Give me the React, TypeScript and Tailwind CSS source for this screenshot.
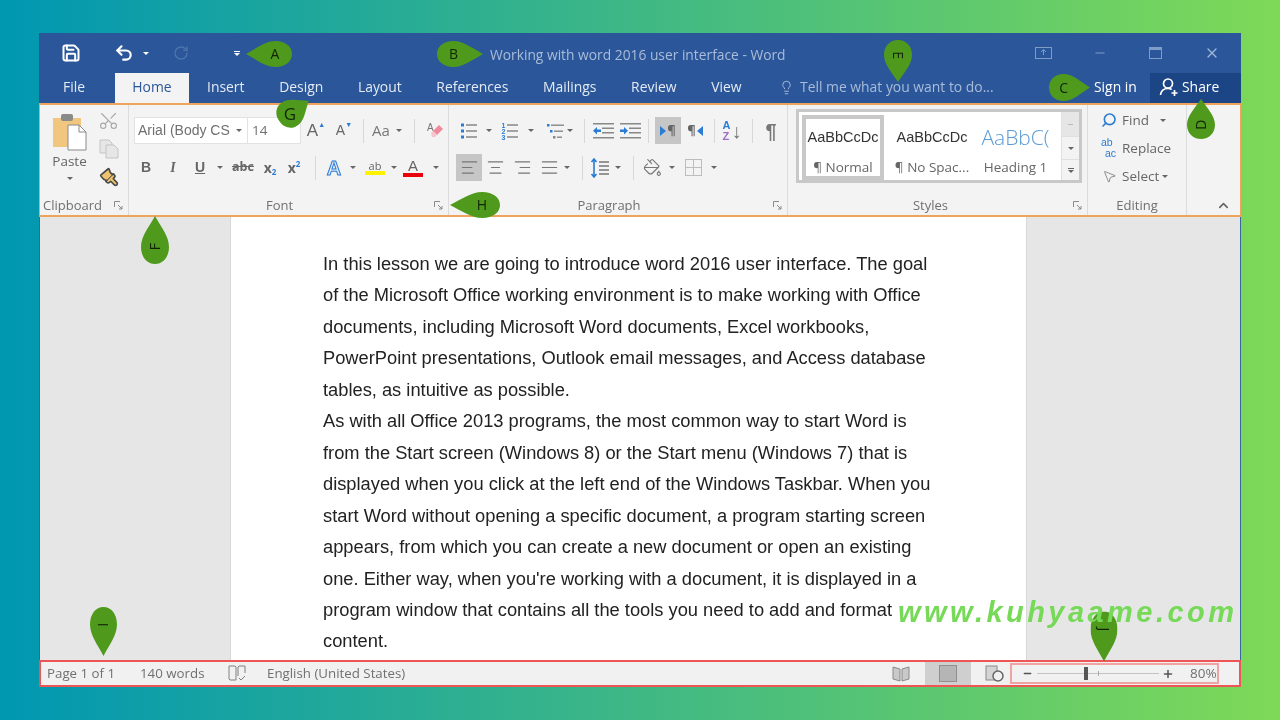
import type { ReactNode } from 'react';
import {
  AlignCenter,
  AlignJustify,
  AlignLeft,
  AlignRight,
  ChevronUp,
  Lightbulb,
  Minus,
  MousePointer2,
  Paintbrush,
  PaintBucket,
  Plus,
  Save,
  Scissors,
  Search,
  Undo2,
  RotateCw,
  X,
} from 'lucide-react';

const docLines = [
  'In this lesson we are going to introduce word 2016 user interface. The goal',
  'of the Microsoft Office working environment is to make working with Office',
  'documents, including Microsoft Word documents, Excel workbooks,',
  'PowerPoint presentations, Outlook email messages, and Access database',
  'tables, as intuitive as possible.',
  'As with all Office 2013 programs, the most common way to start Word is',
  'from the Start screen (Windows 8) or the Start menu (Windows 7) that is',
  'displayed when you click at the left end of the Windows Taskbar. When you',
  'start Word without opening a specific document, a program starting screen',
  'appears, from which you can create a new document or open an existing',
  "one. Either way, when you're working with a document, it is displayed in a",
  'program window that contains all the tools you need to add and format',
  'content.',
];

function Caret({ className = '' }: { className?: string }) {
  return <span className={`block w-0 h-0 border-x-[3px] border-x-transparent border-t-[3px] border-t-[#666] ${className}`} />;
}

function Cell({ w, children, className = '' }: { w: string; children?: ReactNode; className?: string }) {
  return <div className={`flex items-center justify-center shrink-0 ${w} ${className}`}>{children}</div>;
}

function Sep({ className = 'h-[24px]' }: { className?: string }) {
  return <div className={`w-px bg-[#d8d8d8] shrink-0 ${className}`} />;
}

function Launcher() {
  return (
    <svg width="9" height="9" viewBox="0 0 9 9" className="text-[#8a8a8a]">
      <path d="M0.5 6V0.5H6" fill="none" stroke="currentColor" />
      <path d="M4 4L8 8M8 5v3H5" fill="none" stroke="currentColor" />
    </svg>
  );
}

function Lines({ dots, numbers }: { dots?: boolean; numbers?: boolean }) {
  return (
    <svg width="18" height="18" viewBox="0 0 18 18">
      {[3, 9, 15].map((y, i) => (
        <g key={y}>
          {dots && <rect x="1" y={y - 1.5} width="3" height="3" fill="#2b7cd3" />}
          {numbers && (
            <text x="0.5" y={y + 2.5} fontSize="7" fontWeight="bold" fill="#2b7cd3" fontFamily="Liberation Sans">
              {i + 1}
            </text>
          )}
          <rect x="6" y={y - 0.75} width="11" height="1.5" fill="#888" />
        </g>
      ))}
    </svg>
  );
}

function Multilevel() {
  return (
    <svg width="18" height="18" viewBox="0 0 18 18">
      <rect x="0" y="2" width="2.5" height="2.5" fill="#2b7cd3" />
      <rect x="4" y="2.5" width="13" height="1.4" fill="#888" />
      <rect x="3" y="8" width="2.5" height="2.5" fill="#2b7cd3" />
      <rect x="7" y="8.5" width="9" height="1.4" fill="#888" />
      <rect x="6" y="14" width="2.5" height="2.5" fill="#888" />
      <rect x="10" y="14.5" width="5" height="1.4" fill="#888" />
    </svg>
  );
}

function Indent({ flip }: { flip?: boolean }) {
  return (
    <svg width="21" height="18" viewBox="0 0 21 18">
      <rect x="0" y="1" width="21" height="1.5" fill="#888" />
      <rect x="9" y="5.5" width="12" height="1.5" fill="#888" />
      <rect x="9" y="10" width="12" height="1.5" fill="#888" />
      <rect x="0" y="15" width="21" height="1.5" fill="#888" />
      <path d={flip ? 'M0 7.5h4V5l4 3.7-4 3.7V10H0z' : 'M8 7.5H4V5L0 8.7l4 3.7V10h4z'} fill="#2b7cd3" />
    </svg>
  );
}

function Direction({ rtl }: { rtl?: boolean }) {
  return (
    <span className="flex items-center text-[13px] font-bold text-[#666]">
      {!rtl && <span className="w-0 h-0 border-y-[5px] border-y-transparent border-l-[6px] border-l-[#2b7cd3] mr-[1px]" />}
      <span>¶</span>
      {rtl && <span className="w-0 h-0 border-y-[5px] border-y-transparent border-r-[6px] border-r-[#2b7cd3] ml-[1px]" />}
    </span>
  );
}

function Pin({ className, letter, letterClassName = '' }: { className: string; letter: string; letterClassName?: string }) {
  return (
    <div className={`absolute ${className}`}>
      <svg viewBox="0 0 48 28" preserveAspectRatio="none" className="w-full h-full block">
        <path d="M0 14C0 6 7 0 17 0C28 0 37 8 48 14C37 20 28 28 17 28C7 28 0 22 0 14Z" fill="#4f9a1c" />
      </svg>
      <span className={`absolute top-1/2 left-[36%] -translate-x-1/2 -translate-y-1/2 text-[14px] leading-none text-[#102406] ${letterClassName}`}>
        {letter}
      </span>
    </div>
  );
}

function StyleItem({ sample, label, className = '' }: { sample: ReactNode; label: string; className?: string }) {
  return (
    <div className={`flex flex-col items-center overflow-hidden shrink-0 ${className}`}>
      <div className="h-[34px] flex items-center whitespace-nowrap">{sample}</div>
      <div className="text-[13.5px] text-[#666] whitespace-nowrap leading-none mt-[6px]">{label}</div>
    </div>
  );
}

function Group({
  w,
  label,
  children,
  launcher = true,
  labelClassName = 'justify-center',
}: {
  w: string;
  label: string;
  children: ReactNode;
  launcher?: boolean;
  labelClassName?: string;
}) {
  return (
    <div className={`relative flex flex-col shrink-0 h-full border-r border-[#dcdcdc] ${w}`}>
      <div className="flex-1 min-h-0">{children}</div>
      <div className={`h-[19px] flex items-center text-[13px] text-[#707070] ${labelClassName}`}>{label}</div>
      {launcher && <div className="absolute right-[5px] bottom-[5px] flex"><Launcher /></div>}
    </div>
  );
}

export default function App() {
  return (
    <div className="w-[1280px] h-[720px] overflow-hidden bg-linear-to-r/srgb from-[#0097b2] to-[#7ed957] font-['Open_Sans',sans-serif]">
      <div className="relative h-full pt-[33px] pl-[39px] blur-[0.6px]">
        <div className="w-[1202px] h-[654px] flex flex-col">
          {/* Title bar */}
          <div className="h-[40px] shrink-0 bg-[#2b579a] flex items-center text-white">
            <Cell w="w-[64px]"><Save size={20} strokeWidth={2.4} /></Cell>
            <Cell w="w-[46px] ml-[-5px]"><Undo2 size={20} strokeWidth={2.6} className="ml-[6px]" /></Cell>
            <Caret className="border-t-white ml-[-1px]" />
            <Cell w="w-[30px] ml-[17px]"><RotateCw size={16} strokeWidth={2} className="text-[#4d74ad]" /></Cell>
            <div className="ml-[38px] flex flex-col items-center gap-[1px]">
              <span className="block w-[6px] h-px bg-white" />
              <Caret className="border-t-white" />
            </div>
            <div className="ml-[250px] mt-[4px] text-[13.8px] text-[#a9bcd9] whitespace-nowrap w-[545px]">
              Working with word 2016 user interface - Word
            </div>
            <svg width="17" height="12" viewBox="0 0 17 12" className="text-[#7f9cc6]">
              <rect x="0.5" y="0.5" width="16" height="11" fill="none" stroke="currentColor" />
              <path d="M8.5 8V3M6 5l2.5-2.5L11 5" fill="none" stroke="currentColor" />
            </svg>
            <Minus size={14} className="text-[#7f9cc6] ml-[41px]" />
            <svg width="13" height="12" viewBox="0 0 13 12" className="text-[#7f9cc6] ml-[42px]">
              <rect x="0.5" y="0.5" width="12" height="11" fill="none" stroke="currentColor" />
              <rect x="0.5" y="0.5" width="12" height="2.5" fill="currentColor" />
            </svg>
            <X size={16} className="text-[#9db3d4] ml-[42px]" />
          </div>

          {/* Tabs */}
          <div className="h-[30px] shrink-0 bg-[#2b579a] flex items-end text-[13.9px] text-[#e3eaf4]">
            <div className="h-full flex items-center ml-[24px] w-[52px] pb-[2px]">File</div>
            <div className="h-full w-[74px] bg-[#f3f3f3] flex items-center justify-center text-[#2b579a] pb-[2px]">Home</div>
            <div className="h-full flex items-center ml-[18px] gap-[34.7px] w-[572px] pb-[2px]">
              <span>Insert</span>
              <span>Design</span>
              <span>Layout</span>
              <span>References</span>
              <span>Mailings</span>
              <span>Review</span>
              <span>View</span>
            </div>
            <div className="h-full flex items-center text-[#a9bcd9] pb-[2px]">
              <Lightbulb size={15} strokeWidth={1.5} className="mr-[6px]" />
              <span className="w-[294px] whitespace-nowrap">Tell me what you want to do...</span>
            </div>
            <div className="h-full flex items-center w-[56px] text-white pb-[2px]">Sign in</div>
            <div className="h-full flex-1 bg-[#1c4585] flex items-center pl-[9px] text-white pb-[2px]">
              <svg width="20" height="20" viewBox="0 0 20 20" className="mr-[3px]" fill="none" stroke="currentColor" strokeWidth="1.7">
                <circle cx="9" cy="6.5" r="4.5" />
                <path d="M1.5 18c.5-4 3-6.5 7.5-6.5 1.500 0 2.7.3 3.7.9M15.5 13v6M12.5 16h6" />
              </svg>
              Share
            </div>
          </div>

          {/* Ribbon */}
          <div className="h-[114px] shrink-0 bg-[#f3f3f3] border-y-2 border-x border-[#f0a35c] flex">
            <Group w="w-[89px]" label="Clipboard" labelClassName="pl-[3px]">
              <div className="flex h-full">
                <div className="w-[59px] flex flex-col items-center pt-[8px]">
                  <svg width="36" height="38" viewBox="0 0 36 38">
                    <rect x="1" y="5" width="28" height="29" fill="#f1c77f" />
                    <rect x="9" y="1" width="12" height="7" rx="2" fill="#8a8a8a" />
                    <path d="M16 12h11l7 7v18H16z" fill="#fff" stroke="#8a8a8a" />
                    <path d="M27 12v7h7" fill="none" stroke="#8a8a8a" />
                  </svg>
                  <span className="text-[13.5px] text-[#666] leading-none mt-[4px]">Paste</span>
                  <Caret className="mt-[8px]" />
                </div>
                <div className="flex flex-col items-center gap-[8px] pt-[5px] ml-[-1px]">
                  <Scissors size={21} strokeWidth={1.3} className="text-[#a8a8a8] -rotate-90" />
                  <svg width="20" height="20" viewBox="0 0 20 20" fill="#e6e6e6" stroke="#c4c4c4">
                    <path d="M1 1h9l3 3v10H1z" />
                    <path d="M7 6h8l4 4v9H7z" />
                  </svg>
                  <Paintbrush size={20} strokeWidth={2} className="text-[#4a4a4a] fill-[#edc36f] rotate-90" />
                </div>
              </div>
            </Group>

            <Group w="w-[320px]" label="Font" labelClassName="justify-center pr-[18px]">
              <div className="flex flex-col pl-[5px] pt-[12px]">
                <div className="flex items-center h-[27px]">
                  <div className="w-[114px] h-full bg-white border border-[#e2e2e2] flex items-center justify-between pl-[3px] pr-[5px] text-[14px] text-[#707070] font-['Liberation_Sans',sans-serif]">
                    <span>Arial (Body CS</span>
                    <Caret />
                  </div>
                  <div className="w-[53px] h-full bg-white border border-l-0 border-[#e2e2e2] flex items-center pl-[4px] text-[13.5px] text-[#707070]">14</div>
                  <Cell w="w-[28px] ml-[1px]" className="text-[#666] text-[17px] font-['Liberation_Sans',sans-serif]">A<span className="text-[7px] text-[#2b7cd3] -mt-[10px]">▲</span></Cell>
                  <Cell w="w-[28px]" className="text-[#666] text-[14px] font-['Liberation_Sans',sans-serif]">A<span className="text-[7px] text-[#2b7cd3] -mt-[10px]">▼</span></Cell>
                  <Sep className="h-[24px] ml-[5px]" />
                  <Cell w="w-[26px] ml-[4px]" className="text-[15px] text-[#777]">Aa</Cell>
                  <Caret className="ml-[2px]" />
                  <Sep className="h-[24px] ml-[12px]" />
                  <Cell w="w-[24px] ml-[7px]">
                    <svg width="18" height="18" viewBox="0 0 18 18">
                      <path d="M8 9l6-6 4 4-6 6z" fill="#ef8a9c" />
                      <path d="M6 11l2-2 4 4-2 2H7z" fill="#f5c4cc" />
                      <text x="2" y="9" fontSize="10" fill="#777" fontFamily="Liberation Sans">A</text>
                    </svg>
                  </Cell>
                </div>
                <div className="flex items-center h-[27px] mt-[10px] text-[#666]">
                  <Cell w="w-[24px]" className="font-bold text-[14px] font-['Liberation_Sans',sans-serif]">B</Cell>
                  <Cell w="w-[30px]" className="italic font-bold text-[14px] font-['Liberation_Serif',serif]">I</Cell>
                  <Cell w="w-[24px]" className="font-bold underline text-[14px] font-['Liberation_Sans',sans-serif]">U</Cell>
                  <Caret className="ml-[5px]" />
                  <Cell w="w-[30px] ml-[5px]" className="text-[12.5px] line-through font-bold">abc</Cell>
                  <Cell w="w-[24px]" className="font-bold text-[14px]">x<span className="text-[8px] text-[#2b7cd3] mt-[8px]">2</span></Cell>
                  <Cell w="w-[24px]" className="font-bold text-[14px]">x<span className="text-[8px] text-[#2b7cd3] -mt-[8px]">2</span></Cell>
                  <Sep className="h-[24px] ml-[9px]" />
                  <Cell w="w-[28px] ml-[4px]">
                    <span className="text-[20px] font-bold text-[#dbe9f7] [-webkit-text-stroke:1px_#2b7cd3] font-['Liberation_Sans',sans-serif] leading-none">A</span>
                  </Cell>
                  <Caret className="ml-[2px]" />
                  <Cell w="w-[26px] ml-[6px]">
                    <div className="flex flex-col items-center leading-none">
                      <span className="text-[11px] text-[#666]">ab</span>
                      <span className="block w-[20px] h-[4px] bg-[#fff200]" />
                    </div>
                  </Cell>
                  <Caret className="ml-[3px]" />
                  <Cell w="w-[22px] ml-[5px]">
                    <div className="flex flex-col items-center leading-none">
                      <span className="text-[15px] text-[#666] font-['Liberation_Sans',sans-serif]">A</span>
                      <span className="block w-[20px] h-[4px] bg-[#e8000d]" />
                    </div>
                  </Cell>
                  <Caret className="ml-[9px]" />
                </div>
              </div>
            </Group>

            <Group w="w-[339px]" label="Paragraph" labelClassName="justify-center pr-[18px]">
              <div className="flex flex-col pl-[6px] pt-[12px]">
                <div className="flex items-center h-[27px]">
                  <Cell w="w-[27px]"><Lines dots /></Cell>
                  <Caret className="ml-[4px]" />
                  <Cell w="w-[24px] ml-[6px]"><Lines numbers /></Cell>
                  <Caret className="ml-[6px]" />
                  <Cell w="w-[24px] ml-[10px]"><Multilevel /></Cell>
                  <Caret className="ml-[-1px]" />
                  <Sep className="h-[24px] ml-[11px]" />
                  <Cell w="w-[26px] ml-[5px]"><Indent /></Cell>
                  <Cell w="w-[26px] ml-[1px]"><Indent flip /></Cell>
                  <Sep className="h-[24px] ml-[5px]" />
                  <Cell w="w-[26px] ml-[6px] h-[27px]" className="bg-[#c6c6c6]"><Direction /></Cell>
                  <Cell w="w-[26px] ml-[1px]"><Direction rtl /></Cell>
                  <Sep className="h-[24px] ml-[6px]" />
                  <Cell w="w-[24px] ml-[5px]">
                    <div className="flex flex-col text-[11px] leading-[11px] font-bold font-['Liberation_Sans',sans-serif] mr-[1px]">
                      <span className="text-[#2b7cd3]">A</span>
                      <span className="text-[#9b6fc4]">Z</span>
                    </div>
                    <span className="text-[#777] text-[20px] leading-none">↓</span>
                  </Cell>
                  <Sep className="h-[24px] ml-[8px]" />
                  <Cell w="w-[24px] ml-[6px]" className="text-[#777] text-[20px] font-bold font-['Liberation_Sans',sans-serif]">¶</Cell>
                </div>
                <div className="flex items-center h-[27px] mt-[10px] ml-[1px]">
                  <Cell w="w-[26px] h-[27px]" className="bg-[#c6c6c6]"><AlignLeft size={19} strokeWidth={1.5} className="text-[#777]" /></Cell>
                  <Cell w="w-[27px]"><AlignCenter size={19} strokeWidth={1.5} className="text-[#777]" /></Cell>
                  <Cell w="w-[27px]"><AlignRight size={19} strokeWidth={1.5} className="text-[#777]" /></Cell>
                  <Cell w="w-[27px]"><AlignJustify size={19} strokeWidth={1.5} className="text-[#777]" /></Cell>
                  <Caret className="ml-[1px]" />
                  <Sep className="h-[24px] ml-[12px]" />
                  <Cell w="w-[24px] ml-[5px]">
                    <svg width="20" height="20" viewBox="0 0 20 20">
                      <path d="M4 1v18M1.5 4L4 1l2.5 3M1.5 16L4 19l2.5-3" fill="none" stroke="#2b7cd3" strokeWidth="1.6" />
                      <path d="M9 4h10M9 8h10M9 12h10M9 16h10" stroke="#777" strokeWidth="1.5" />
                    </svg>
                  </Cell>
                  <Caret className="ml-[3px]" />
                  <Sep className="h-[24px] ml-[12px]" />
                  <Cell w="w-[24px] ml-[6px]"><PaintBucket size={19} strokeWidth={1.4} className="text-[#777]" /></Cell>
                  <Caret className="ml-[5px]" />
                  <Cell w="w-[22px] ml-[7px]">
                    <svg width="17" height="17" viewBox="0 0 17 17" fill="none" stroke="#bdbdbd">
                      <rect x="0.5" y="0.5" width="16" height="16" />
                      <path d="M8.5 0v17M0 8.5h17" />
                    </svg>
                  </Cell>
                  <Caret className="ml-[7px]" />
                </div>
              </div>
            </Group>

            <Group w="w-[300px]" label="Styles" labelClassName="justify-center pr-[14px]">
              <div className="ml-[8px] mt-[4px] w-[286px] h-[74px] border-[3px] border-[#c8c8c8] bg-white flex">
                <div className="flex-1 flex p-[3px] pr-0">
                  <StyleItem
                    className="w-[82px] border-[4px] border-[#c8c8c8] h-[65px] pt-[2px]"
                    sample={<span className="text-[14.5px] text-[#333] font-['Liberation_Sans',sans-serif]">AaBbCcDc</span>}
                    label="¶ Normal"
                  />
                  <StyleItem
                    className="w-[84px] ml-[6px] pt-[6px]"
                    sample={<span className="text-[14.5px] text-[#333] font-['Liberation_Sans',sans-serif]">AaBbCcDc</span>}
                    label="¶ No Spac..."
                  />
                  <StyleItem
                    className="w-[77px] ml-[3px] pt-[6px]"
                    sample={<span className="text-[21px] font-light text-[#5b9bd5]">AaBbC(</span>}
                    label="Heading 1"
                  />
                </div>
                <div className="w-[18px] flex flex-col border-l border-[#e0e0e0] bg-[#f3f3f3]">
                  <div className="h-[24px] flex items-center justify-center bg-[#e6e6e6]"><span className="block w-[5px] h-px bg-[#bbb]" /></div>
                  <div className="h-[24px] flex items-center justify-center border-y border-[#e0e0e0]"><Caret /></div>
                  <div className="flex-1 flex flex-col items-center justify-center gap-[1px]"><span className="block w-[6px] h-px bg-[#666]" /><Caret /></div>
                </div>
              </div>
            </Group>

            <Group w="w-[99px]" label="Editing" launcher={false}>
              <div className="flex flex-col pl-[13px] pt-[1px] text-[13.5px] text-[#666]">
                <div className="flex items-center h-[28px]">
                  <Search size={16} strokeWidth={2.4} className="text-[#2b7cd3] -scale-x-100 mr-[5px]" />
                  <span>Find</span>
                  <Caret className="ml-[11px]" />
                </div>
                <div className="flex items-center h-[28px]">
                  <span className="flex flex-col text-[10.5px] leading-[11px] text-[#2b7cd3] w-[21px] font-['Liberation_Sans',sans-serif]">
                    <span>ab</span>
                    <span className="ml-[4px]">ac</span>
                  </span>
                  <span>Replace</span>
                </div>
                <div className="flex items-center h-[28px]">
                  <MousePointer2 size={15} strokeWidth={1.3} className="text-[#777] ml-[1px] mr-[5px]" />
                  <span>Select</span>
                  <Caret className="ml-[3px]" />
                </div>
              </div>
            </Group>

            <div className="flex-1 flex items-end justify-end pr-[9px] pb-[2px]">
              <ChevronUp size={15} strokeWidth={2.6} className="text-[#666]" />
            </div>
          </div>

          {/* Document */}
          <div className="flex-1 min-h-0 flex bg-[#e6e6e6] border-x border-[#3a65a5]">
            <div className="ml-[190px] w-[797px] bg-white border-x border-[#d8d8d8] pt-[31px] pl-[92px] text-[18.3px] leading-[31.45px] text-[#222] font-['Liberation_Sans',sans-serif] whitespace-nowrap overflow-hidden">
              {docLines.map((line) => (
                <div key={line}>{line}</div>
              ))}
            </div>
          </div>

          {/* Status bar */}
          <div className="h-[27px] shrink-0 bg-[#f1f1f1] border-2 border-[#ee5656] flex items-center text-[13.3px] text-[#707070]">
            <span className="ml-[6px] w-[93px]">Page 1 of 1</span>
            <span className="w-[88px]">140 words</span>
            <svg width="18" height="17" viewBox="0 0 18 17" fill="none" stroke="#808080" className="w-[18px]">
              <path d="M1 1h6l1 1v13H2l-1-1zM10 2l1-1h6v7M10 2v9" />
              <path d="M11 13l2 2 4-4" />
            </svg>
            <span className="ml-[21px] w-[624px] whitespace-nowrap">English (United States)</span>
            <Cell w="w-[20px]">
              <svg width="18" height="16" viewBox="0 0 18 16" fill="#c9c9c9" stroke="#8a8a8a">
                <path d="M1 1l7 2v12l-7-2zM17 1l-7 2v12l7-2z" />
              </svg>
            </Cell>
            <Cell w="w-[46px] ml-[14px] h-full" className="bg-[#cfcfcf]">
              <span className="block w-[18px] h-[17px] bg-[#b5b5b5] border border-[#8f8f8f]" />
            </Cell>
            <Cell w="w-[22px] ml-[12px]">
              <svg width="19" height="17" viewBox="0 0 19 17">
                <rect x="1" y="1" width="11" height="14" fill="#d4d4d4" stroke="#8a8a8a" />
                <circle cx="13" cy="11" r="5" fill="#f1f1f1" stroke="#666" strokeWidth="1.5" />
              </svg>
            </Cell>
            <div className="ml-[5px] w-[209px] h-[21px] border-2 border-[#f0a3a3] flex items-center">
              <Minus size={11} strokeWidth={3} className="text-[#555] ml-[10px]" />
              <div className="relative ml-[4px] w-[122px] h-px bg-[#c4c4c4]">
                <span className="absolute left-[47px] top-[-6px] w-[4px] h-[13px] bg-[#555]" />
                <span className="absolute left-[61px] top-[-2px] w-px h-[5px] bg-[#aaa]" />
              </div>
              <Plus size={12} strokeWidth={3} className="text-[#555] ml-[3px]" />
              <span className="ml-[16px] text-[#707070] text-[13.5px]">80%</span>
            </div>
          </div>
        </div>

        {/* Callout pins and watermark sit over the window */}
        <Pin className="left-[246px] top-[41px] w-[46px] h-[26px] rotate-180" letter="A" letterClassName="rotate-180" />
        <Pin className="left-[437px] top-[41px] w-[46px] h-[26px]" letter="B" />
        <Pin className="left-[1049px] top-[74px] w-[41px] h-[27px]" letter="C" />
        <Pin className="left-[877px] top-[47px] w-[42px] h-[28px] rotate-90" letter="E" />
        <Pin className="left-[1181px] top-[105px] w-[40px] h-[28px] -rotate-90" letter="D" />
        <Pin className="left-[131px] top-[226px] w-[48px] h-[28px] -rotate-90" letter="F" />
        <Pin className="left-[276px] top-[97px] w-[36px] h-[28px] -rotate-[35deg]" letter="G" letterClassName="rotate-[35deg] text-[17px]" />
        <Pin className="left-[450px] top-[192px] w-[50px] h-[26px] rotate-180" letter="H" letterClassName="rotate-180" />
        <Pin className="left-[79px] top-[618px] w-[49px] h-[27px] rotate-90" letter="I" />
        <Pin className="left-[1079px] top-[623px] w-[50px] h-[27px] rotate-90" letter="J" />
        <div className="absolute left-[898px] top-[594px] text-[29px] leading-[36px] italic font-bold tracking-[3.45px] text-[#76d957] whitespace-nowrap font-['Liberation_Sans',sans-serif]">
          www.kuhyaame.com
        </div>
      </div>
    </div>
  );
}
